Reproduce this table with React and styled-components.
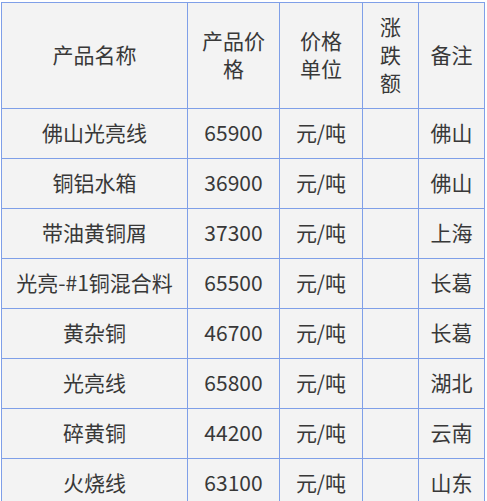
import React from 'react';
import styled, { createGlobalStyle } from 'styled-components';

const GlobalStyle = createGlobalStyle`
  html, body {
    margin: 0;
    padding: 0;
    background: #ffffff;
  }
  body {
    font-family: "Noto Sans CJK SC", "Noto Sans", sans-serif;
  }
`;

const Page = styled.div`
  padding: 2px 0 0 1px;
`;

const PriceTable = styled.table`
  width: 483px;
  table-layout: fixed;
  border-collapse: collapse;
  background: #f3f3f3;
  color: #383838;
  font-size: 21px;
`;

const HeadCell = styled.th`
  height: 101px;
  padding: 0 11px 4px;
  border: 1px solid #7f9fe8;
  font-weight: 400;
  line-height: 28px;
  text-align: center;
  vertical-align: middle;
`;

const Cell = styled.td`
  height: 46px;
  padding: 0 4px 3px;
  border: 1px solid #7f9fe8;
  line-height: 28px;
  text-align: center;
  vertical-align: middle;
  white-space: nowrap;
`;

const columns = [
  { title: '产品名称', width: 186 },
  { title: '产品价格', width: 92 },
  { title: '价格单位', width: 83 },
  { title: '涨跌额', width: 56 },
  { title: '备注', width: 66 },
];

const rows = [
  { name: '佛山光亮线', price: '65900', area: '佛山' },
  { name: '铜铝水箱', price: '36900', area: '佛山' },
  { name: '带油黄铜屑', price: '37300', area: '上海' },
  { name: '光亮-#1铜混合料', price: '65500', area: '长葛' },
  { name: '黄杂铜', price: '46700', area: '长葛' },
  { name: '光亮线', price: '65800', area: '湖北' },
  { name: '碎黄铜', price: '44200', area: '云南' },
  { name: '火烧线', price: '63100', area: '山东' },
];

const App = () => (
  <Page>
    <GlobalStyle />
    <PriceTable>
      <colgroup>
        {columns.map((c) => (
          <col key={c.title} style={{ width: c.width }} />
        ))}
      </colgroup>
      <thead>
        <tr>
          {columns.map((c) => (
            <HeadCell key={c.title}>{c.title}</HeadCell>
          ))}
        </tr>
      </thead>
      <tbody>
        {rows.map((r) => (
          <tr key={r.name}>
            <Cell>{r.name}</Cell>
            <Cell>{r.price}</Cell>
            <Cell>元/吨</Cell>
            <Cell />
            <Cell>{r.area}</Cell>
          </tr>
        ))}
      </tbody>
    </PriceTable>
  </Page>
);

export default App;
